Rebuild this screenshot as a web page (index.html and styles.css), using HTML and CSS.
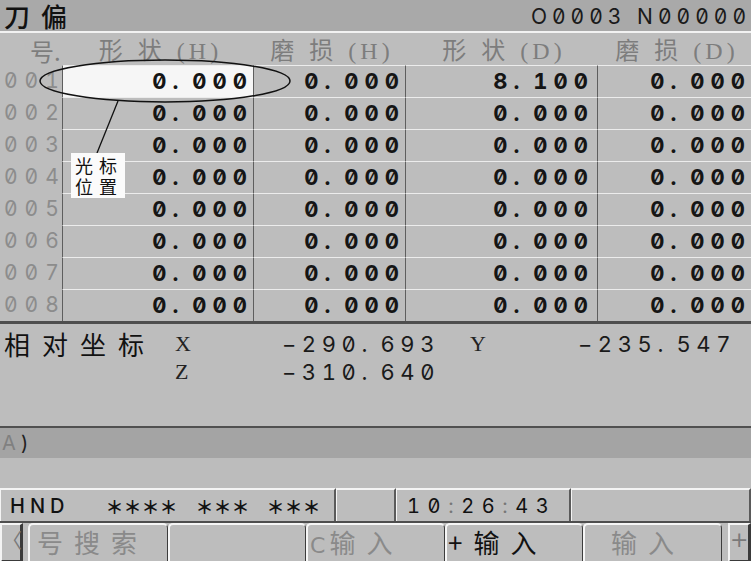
FILE: index.html
```html
<!DOCTYPE html>
<html lang="zh">
<head>
<meta charset="utf-8">
<link rel="stylesheet" href="styles.css">
</head>
<body>
<div class="screen">
  <div class="title">
    <span class="t-name">刀偏</span>
    <span class="t-prog">O0003 N00000</span>
  </div>

  <div class="grid head">
    <div class="hno">号.</div>
    <div class="hc"><span class="zh">形状</span><span class="en">(H)</span></div>
    <div class="hc"><span class="zh">磨损</span><span class="en">(H)</span></div>
    <div class="hc"><span class="zh">形状</span><span class="en">(D)</span></div>
    <div class="hc"><span class="zh">磨损</span><span class="en">(D)</span></div>
  </div>

  <div class="grid row"><div class="no">001</div><div class="c sel">0. 000</div><div class="c">0. 000</div><div class="c">8. 100</div><div class="c">0. 000</div></div>
  <div class="grid row"><div class="no">002</div><div class="c">0. 000</div><div class="c">0. 000</div><div class="c">0. 000</div><div class="c">0. 000</div></div>
  <div class="grid row"><div class="no">003</div><div class="c">0. 000</div><div class="c">0. 000</div><div class="c">0. 000</div><div class="c">0. 000</div></div>
  <div class="grid row"><div class="no">004</div><div class="c">0. 000</div><div class="c">0. 000</div><div class="c">0. 000</div><div class="c">0. 000</div></div>
  <div class="grid row"><div class="no">005</div><div class="c">0. 000</div><div class="c">0. 000</div><div class="c">0. 000</div><div class="c">0. 000</div></div>
  <div class="grid row"><div class="no">006</div><div class="c">0. 000</div><div class="c">0. 000</div><div class="c">0. 000</div><div class="c">0. 000</div></div>
  <div class="grid row"><div class="no">007</div><div class="c">0. 000</div><div class="c">0. 000</div><div class="c">0. 000</div><div class="c">0. 000</div></div>
  <div class="grid row"><div class="no">008</div><div class="c">0. 000</div><div class="c">0. 000</div><div class="c">0. 000</div><div class="c">0. 000</div></div>

  <div class="coord">
    <div class="clabel">相对坐标</div>
    <div class="axis">X</div>
    <div class="val">−290. 693</div>
    <div class="spacer"></div>
    <div class="axis">Y</div>
    <div class="val">−235. 547</div>
    <div class="clabel"></div>
    <div class="axis">Z</div>
    <div class="val">−310. 640</div>
  </div>

  <div class="cmd"><span class="prompt">A</span><span class="caret">)</span></div>
  <div class="blank"></div>

  <div class="status">
    <div class="sb sb1"><span class="mode">HND</span><span class="stars s1">＊＊＊＊</span><span class="stars s2">＊＊＊</span><span class="stars s3">＊＊＊</span></div>
    <div class="sb sb2"></div>
    <div class="sb sb3"><span class="time">10<i>:</i>26<i>:</i>43</span></div>
    <div class="sb sb4"></div>
  </div>

  <div class="keys">
    <div class="kbtn">〈</div>
    <div class="key k1">号搜索</div>
    <div class="key k2"></div>
    <div class="key k3"><span class="kc">C</span>输入</div>
    <div class="key k4 on">+输入</div>
    <div class="key k5">输入</div>
    <div class="kbtn kplus">+</div>
  </div>

  <svg class="overlay" width="751" height="561" viewBox="0 0 751 561">
    <ellipse cx="165" cy="81" rx="125" ry="21" fill="none" stroke="#111" stroke-width="1.5"/>
    <line x1="118" y1="101" x2="97" y2="153" stroke="#111" stroke-width="1.3"/>
  </svg>
  <div class="tip">光标<br>位置</div>
</div>
</body>
</html>
```

FILE: styles.css
```css
* { box-sizing: border-box; }
html, body { margin: 0; padding: 0; background: #bdbdbd; }
.screen {
  position: relative;
  width: 751px;
  height: 561px;
  overflow: hidden;
  background: #bdbdbd;
  display: flex;
  flex-direction: column;
  font-family: "Noto Sans CJK SC", sans-serif;
}

/* shared numeric face: tabular, slashed zero */
.t-prog, .no, .c, .val, .sb, .cmd {
  font-family: Inter, "DejaVu Sans Mono", sans-serif;
  font-feature-settings: "tnum" 1, "zero" 1;
}

/* title */
.title {
  height: 33px;
  flex: none;
  background: #a9a9a9;
  border-bottom: 2px solid #f2f2f2;
  display: flex;
  justify-content: space-between;
  align-items: center;
}
.t-name {
  font-size: 26px;
  font-weight: 500;
  letter-spacing: 11px;
  padding-left: 4px;
  color: #111;
  line-height: 31px;
}
.t-prog {
  font-size: 21px;
  letter-spacing: 5px;
  color: #1a1a1a;
  padding-top: 2px;
}

/* table */
.grid {
  display: grid;
  grid-template-columns: 62px 191px 152px 192px 154px;
  flex: none;
}
.head { height: 32px; align-items: center; }
.hno {
  padding-left: 30px;
  font-size: 24px;
  color: #7d7d7d;
  line-height: 32px;
  white-space: nowrap;
}
.hc {
  text-align: center;
  color: #7d7d7d;
  line-height: 32px;
  white-space: nowrap;
  padding-left: 6px;
}
.hc .zh { font-size: 24px; letter-spacing: 15px; }
.hc .en { font-family: "Liberation Serif", serif; font-size: 24px; letter-spacing: 4px; }

.row { height: 32px; }
.no {
  font-size: 21px;
  letter-spacing: 7px;
  color: #8c8c8c;
  padding-left: 4px;
  line-height: 32px;
}
.c {
  border-top: 1px solid #ececec;
  border-left: 1px solid #5e5e5e;
  text-align: right;
  font-weight: 700;
  font-size: 22px;
  letter-spacing: 6px;
  word-spacing: -4px;
  color: #151515;
  line-height: 31px;
  white-space: pre;
}
.row .c:nth-child(4) { padding-right: 3px; }
.c.sel { background: #f6f6f6; }

/* coordinates */
.coord {
  flex: none;
  height: 105px;
  border-top: 3px solid #4e4e4e;
  display: grid;
  grid-template-columns: 175px 30px 235px 30px 30px 236px;
  grid-auto-rows: 28px;
  padding-top: 6px;
  align-items: center;
}
.clabel {
  font-size: 26px;
  letter-spacing: 12px;
  padding-left: 4px;
  color: #111;
  white-space: nowrap;
  line-height: 28px;
}
.axis {
  font-family: "Liberation Serif", serif;
  font-size: 22px;
  color: #222;
}
.val {
  text-align: right;
  font-size: 22px;
  letter-spacing: 5.6px;
  word-spacing: -4px;
  color: #1a1a1a;
  white-space: pre;
}

/* command line */
.cmd {
  flex: none;
  height: 32px;
  border-top: 2px solid #505050;
  background: #a4a4a4;
  font-size: 20px;
  line-height: 30px;
  padding-left: 2px;
}
.prompt { color: #808080; }
.caret { color: #222; margin-left: 5px; }
.blank { flex: none; height: 30px; background: #bcbcbc; }

/* status */
.status {
  flex: none;
  height: 35px;
  display: flex;
  border-bottom: 2px solid #4e4e4e;
}
.sb {
  height: 33px;
  border-top: 2px solid #f4f4f4;
  border-left: 1px solid #f4f4f4;
  border-right: 2px solid #5a5a5a;
  display: flex;
  align-items: center;
  font-size: 20px;
  color: #111;
  white-space: nowrap;
}
.sb1 { width: 336px; padding-left: 9px; }
.sb2 { width: 60px; }
.sb3 { width: 175px; padding-left: 10px; }
.sb4 { flex: 1; }
.mode { letter-spacing: 5px; font-weight: 500; }
.stars {
  font-family: "Noto Sans CJK SC", sans-serif;
  font-size: 18px;
  font-weight: 700;
  color: #111;
}
.s1 { margin-left: 36px; }
.s2 { margin-left: 18px; }
.s3 { margin-left: 17px; }
.time { letter-spacing: 7.6px; }
.time i { font-style: normal; color: #777; }

/* soft keys */
.keys {
  flex: 1;
  display: flex;
  align-items: stretch;
}
.kbtn {
  flex: none;
  width: 23px;
  border-top: 2px solid #f4f4f4;
  border-left: 2px solid #f4f4f4;
  border-right: 3px solid #3a3a3a;
  border-bottom: 3px solid #3a3a3a;
  color: #7a7a7a;
  font-size: 20px;
  line-height: 30px;
  text-align: center;
}
.kplus { margin-left: 6px; font-family: "DejaVu Sans", sans-serif; font-size: 22px; }
.key {
  flex: none;
  border-top: 2px solid #f6f6f6;
  border-left: 2px solid #f6f6f6;
  border-right: 1px solid #3c3c3c;
  border-radius: 5px 5px 0 0;
  font-size: 26px;
  letter-spacing: 11px;
  color: #8a8a8a;
  line-height: 34px;
  white-space: nowrap;
}
.k1 { width: 140px; margin-left: 5px; padding-left: 7px; }
.k2 { width: 138px; }
.k3 { width: 139px; padding-left: 2px; }
.k4 { width: 138px; padding-left: 1px; }
.k5 { width: 139px; padding-left: 26px; }
.kc { font-family: "DejaVu Sans", sans-serif; font-size: 22px; letter-spacing: 4px; }
.key.on { color: #111; }

/* overlay annotation */
.overlay {
  position: absolute;
  left: 0;
  top: 0;
  pointer-events: none;
}
.tip {
  position: absolute;
  left: 71px;
  top: 153px;
  width: 54px;
  height: 45px;
  background: #fbfbfb;
  color: #111;
  font-size: 18px;
  line-height: 21px;
  letter-spacing: 6px;
  padding: 2px 0 0 4px;
  white-space: nowrap;
}
```
